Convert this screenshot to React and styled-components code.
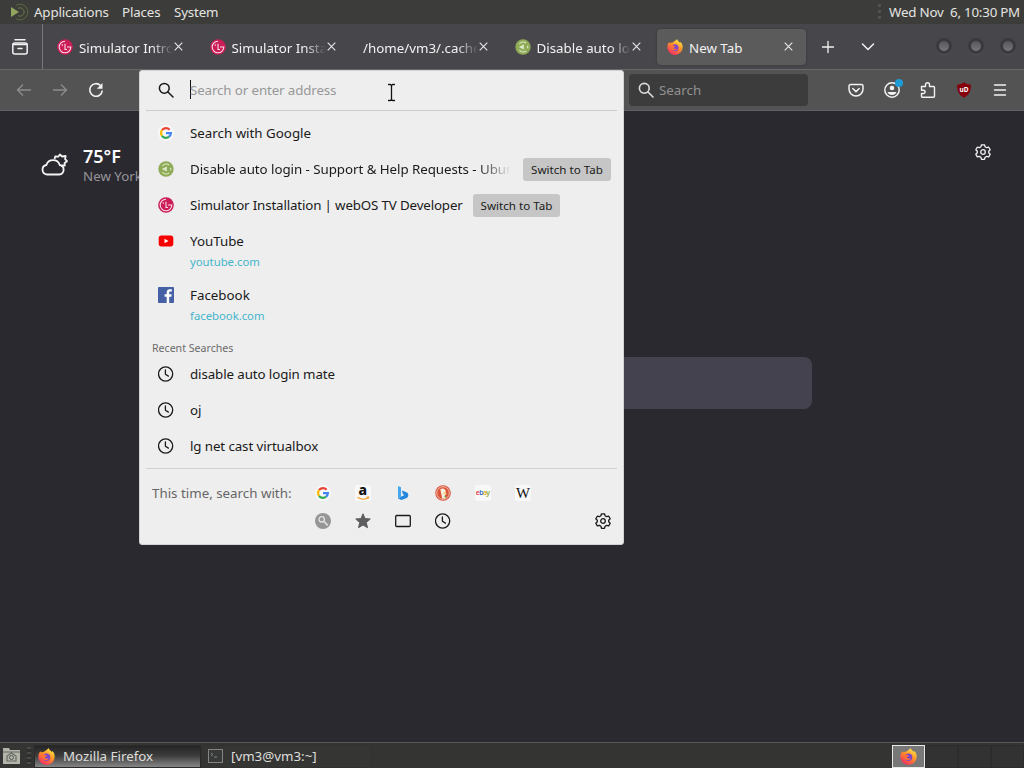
import React from 'react';
import styled, { createGlobalStyle } from 'styled-components';

const GlobalStyle = createGlobalStyle`
  * {
    box-sizing: border-box;
  }

  body {
    margin: 0;
    overflow: hidden;
    font-family: 'Noto Sans', 'Open Sans', sans-serif;
    font-size: 13.33px;
  }

  svg {
    display: block;
    flex-shrink: 0;
  }
`;

const Desktop = styled.div`
  position: relative;
  display: flex;
  flex-direction: column;
  width: 1024px;
  height: 768px;
  background: #2a2930;
  color: #f2f2f2;
`;

const TopPanel = styled.div`
  display: flex;
  align-items: center;
  height: 24px;
  padding: 0 4px 0 9px;
  background: #3c3c3a;
  color: #e4e4e0;
`;

const PanelMenu = styled.span`
  margin-left: ${props => props.$gap}px;
  width: ${props => props.$width}px;
  line-height: 24px;
  letter-spacing: -0.15px;
  white-space: nowrap;
`;

const PanelGrip = styled.span`
  width: 3px;
  height: 17px;
  margin-left: auto;
  background: repeating-linear-gradient(#525250 0 3px, #3c3c3a 3px 6px);
`;

const Clock = styled.span`
  margin-left: 8px;
  letter-spacing: -0.22px;
  white-space: pre;
`;

const TabBar = styled.div`
  display: flex;
  align-items: center;
  height: 45px;
  background: #47464b;
`;

const FirefoxView = styled.div`
  display: flex;
  align-items: center;
  justify-content: center;
  width: 43px;
  height: 45px;
  padding-right: 3px;
  border-right: 1px solid #78787b;
`;

const Tabs = styled.div`
  display: flex;
  gap: 3.5px;
  padding-left: 4px;
`;

const Tab = styled.div`
  display: flex;
  align-items: center;
  width: 149px;
  height: 36px;
  padding: 0 13px 0 10px;
  border-radius: 4px;
  background: ${props => (props.$selected ? '#5b5b5c' : 'transparent')};
  box-shadow: ${props => (props.$selected ? '0 0 2px #303033' : 'none')};
`;

const TabTitle = styled.span`
  flex: 1;
  min-width: 0;
  margin-left: ${props => (props.$noIcon ? 1 : 6)}px;
  padding-top: 2px;
  overflow: hidden;
  line-height: 24px;
  white-space: nowrap;
  mask-image: ${props => (props.$fade ? 'linear-gradient(to left, transparent 1px, black 22px)' : 'none')};
`;

const TabClose = styled.span`
  display: flex;
`;

const TabActions = styled.div`
  display: flex;
  gap: 24px;
  margin-left: 14px;
`;

const WindowButtons = styled.div`
  display: flex;
  gap: 16px;
  margin-left: auto;
  padding: 0 8px 2px 0;
`;

const WindowButton = styled.span`
  width: 16px;
  height: 16px;
  border: 3px solid #3a3a3e;
  border-radius: 50%;
  background: linear-gradient(#55555c, #77777c);
  box-shadow: 0 1px 0 #55555a;
`;

const NavBar = styled.div`
  display: flex;
  align-items: center;
  height: 42px;
  padding: 0 16px;
  border-top: 1px solid #68686a;
  border-bottom: 1px solid #616163;
  background: #535353;
`;

const NavButtons = styled.div`
  display: flex;
  gap: 20px;
  width: 613px;
`;

const SearchBox = styled.div`
  display: flex;
  align-items: center;
  width: 179px;
  height: 32px;
  padding-left: 9px;
  gap: 5px;
  border-radius: 4px;
  background: #3c3c3c;
  color: #929292;
  line-height: 18px;
`;

const ToolbarIcons = styled.div`
  display: flex;
  gap: 20px;
  margin-left: auto;
`;

const Account = styled.div`
  position: relative;
`;

const Badge = styled.span`
  position: absolute;
  top: -3px;
  right: -3px;
  width: 8px;
  height: 8px;
  border-radius: 50%;
  background: #1c9bd6;
`;

const Page = styled.main`
  flex: 1;
  display: flex;
  flex-direction: column;
  background: #2a2930;
`;

const PageHeader = styled.div`
  display: flex;
  justify-content: space-between;
  height: 246px;
  padding: 33px 33px 0 40px;
`;

const Weather = styled.div`
  display: flex;
  gap: 14px;
  height: 42px;
  align-items: center;
`;

const Temperature = styled.div`
  color: #fbfbfe;
  font-size: 18px;
  font-weight: 600;
  line-height: 21px;
`;

const City = styled.div`
  color: #96959a;
  line-height: 18px;
  white-space: nowrap;
`;

const PageSearch = styled.div`
  width: 600px;
  height: 52px;
  margin-left: 212px;
  border-radius: 8px;
  background: #44424e;
`;

const UrlPopup = styled.section`
  position: absolute;
  top: 70px;
  left: 139px;
  width: 485px;
  height: 475px;
  padding: 0 6px;
  border: 1px solid #d2d2d5;
  border-radius: 3px;
  background: #eeeeee;
  color: #1a1a1a;
`;

const UrlInput = styled.div`
  display: flex;
  align-items: center;
  height: 40px;
  padding: 0 0 2px 12px;
  border-bottom: 1px solid #cbcbcb;
`;

const Caret = styled.span`
  width: 1px;
  height: 19px;
  margin-left: 16px;
  background: #111111;
`;

const Placeholder = styled.span`
  margin-left: -1px;
  color: #989898;
  letter-spacing: -0.12px;
`;

const MousePointer = styled.div`
  position: absolute;
  top: 12px;
  left: 247px;
`;

const Results = styled.div`
  padding-top: 4px;
`;

const Result = styled.div`
  display: flex;
  align-items: center;
  height: 36px;
  padding: 0 6px 0 12px;
`;

const ResultTitle = styled.span`
  width: ${props => (props.$width ? props.$width + 'px' : 'auto')};
  margin-left: 16px;
  overflow: ${props => (props.$fade ? 'hidden' : 'visible')};
  line-height: 22px;
  letter-spacing: ${props => props.$spacing || 0}px;
  white-space: nowrap;
  mask-image: ${props => (props.$fade ? 'linear-gradient(to left, transparent, black 32px)' : 'none')};
`;

const SwitchButton = styled.span`
  width: ${props => props.$width}px;
  height: 23px;
  margin-left: ${props => props.$gap}px;
  border-radius: 3px;
  background: #c6c6c6;
  font-size: 11.6px;
  line-height: 23px;
  text-align: center;
  white-space: nowrap;
`;

const TopSite = styled.div`
  display: flex;
  height: 54px;
  padding: 10px 0 0 12px;
`;

const SiteText = styled.div`
  margin: -2px 0 0 16px;
  line-height: 20px;
`;

const SiteUrl = styled.div`
  color: #45b5cb;
  font-size: 11.3px;
  line-height: 21px;
`;

const SectionLabel = styled.div`
  height: 16px;
  margin: 9px 0 0 6px;
  color: #6b6b6b;
  font-size: 10.6px;
  line-height: 17px;
`;

const OneOffs = styled.div`
  display: flex;
  height: 75px;
  margin-top: 4px;
  padding: 16px 6px 0;
  border-top: 1px solid #d1d1d1;
`;

const OneOffLabel = styled.span`
  width: 163px;
  color: #666666;
  line-height: 16px;
  white-space: nowrap;
`;

const EngineGrid = styled.div`
  display: grid;
  grid-template-columns: repeat(6, 16px);
  grid-auto-rows: 16px;
  gap: 12px 24px;
`;

const SettingsButton = styled.span`
  margin: 28px 0 0 auto;
`;

const BottomPanel = styled.div`
  display: flex;
  align-items: center;
  height: 26px;
  padding: 1px 0 0 2px;
  border-top: 1px solid #58585b;
  background: #343433;
`;

const TaskGrip = styled.span`
  width: 4px;
  height: 18px;
  margin: 0 3px 0 6px;
  background: repeating-linear-gradient(#4a4a4a 0 2px, #2e2e2e 2px 5px);
`;

const Task = styled.div`
  display: flex;
  align-items: center;
  gap: 8px;
  width: ${props => (props.$active ? 167 : 171)}px;
  height: 23px;
  padding-left: ${props => (props.$active ? 3 : 6)}px;
  border: 1px solid ${props => (props.$active ? '#2a2a2a' : '#313130')};
  background: ${props => (props.$active ? 'linear-gradient(#252525, #3c3c3c 45%, #858585)' : '#353534')};
  color: #dededb;
  line-height: 20px;
  white-space: nowrap;
`;

const Workspaces = styled.div`
  display: flex;
  margin-left: auto;
`;

const Workspace = styled.span`
  display: flex;
  align-items: center;
  justify-content: center;
  width: 33px;
  height: 23px;
  border: 1px solid ${props => (props.$active ? '#e8e8e8' : '#2c2c2c')};
  background: ${props => (props.$active ? '#787878' : '#323232')};
`;

const Line = ({ size = 16, width = 1.3, children }) => (
  <svg
    width={size}
    height={size}
    viewBox="0 0 16 16"
    fill="none"
    stroke="currentColor"
    strokeWidth={width}
    strokeLinecap="round"
    strokeLinejoin="round"
  >
    {children}
  </svg>
);

const SearchIcon = () => (
  <Line width={1.5}>
    <circle cx="6.3" cy="6.3" r="4.9" />
    <path d="M10 10l5 5" />
  </Line>
);

const ClockIcon = () => (
  <Line width={1.3}>
    <circle cx="7.6" cy="8" r="7.1" />
    <path d="M7.4 4v4.3l3 1.8" />
  </Line>
);

const GearIcon = () => (
  <Line width={1.3}>
    <path d="M6.5.8h3l.6 2 1.5.9 2.1-.5 1.5 2.6-1.5 1.5v1.5l1.5 1.5-1.5 2.6-2.1-.5-1.5.9-.6 2h-3l-.6-2-1.5-.9-2.1.5-1.5-2.6 1.5-1.5V7.3L.8 5.8l1.5-2.6 2.1.5 1.5-.9z" />
    <circle cx="8" cy="8" r="2.3" />
  </Line>
);

const CloseIcon = () => (
  <svg width="9" height="9" viewBox="0 0 9 9" stroke="#e8e8e8" strokeWidth="1.1">
    <path d="M.7.7l7.6 7.6M8.3.7L.7 8.3" />
  </svg>
);

const LgIcon = () => (
  <svg width="16" height="16" viewBox="0 0 16 16" fill="none">
    <circle cx="8" cy="8" r="7.8" fill="#cb1d57" />
    <path d="M8 2.2a5.8 5.8 0 1 0 5.8 5.8H10M8 4.8v5.7h2" stroke="#fbdce6" strokeWidth="1.1" />
    <circle cx="5.3" cy="6" r=".8" fill="#fbdce6" />
  </svg>
);

const MateIcon = () => (
  <svg width="16" height="16" viewBox="0 0 16 16" fill="none">
    <circle cx="8" cy="8" r="7.7" fill="#8fab58" />
    <path d="M4.4 5a4.7 4.7 0 0 1 6.8-.9M4.4 11a4.7 4.7 0 0 0 6.8.9M12.7 6.8v2.4" stroke="#dfe9c8" strokeWidth="1.1" />
    <path d="M3.8 8l5-2.6v5.2z" fill="#dfe9c8" />
  </svg>
);

const MenuLogo = () => (
  <svg width="20" height="18" viewBox="0 0 20 18" fill="none">
    <path d="M2 4l8 5-8 5z" fill="#91a65c" />
    <path d="M7 2.3a7.8 7.8 0 1 1 0 13.4" stroke="#5b6c3c" strokeWidth="1" />
    <path d="M9 5.3a4.2 4.2 0 1 1 0 7.4" stroke="#687949" strokeWidth="1" />
  </svg>
);

const FirefoxIcon = ({ size = 16 }) => (
  <svg width={size} height={size} viewBox="0 0 16 16">
    <defs>
      <linearGradient id="flame" x1=".8" y1="0" x2=".2" y2="1">
        <stop offset="0" stopColor="#fff04a" />
        <stop offset=".45" stopColor="#ff9226" />
        <stop offset="1" stopColor="#f3216b" />
      </linearGradient>
    </defs>
    <path d="M10 0c.3 1.5 1.7 2.3 2.8 3.5.5.2.8-.2.9-.6 1.3 1.5 2 3.3 2 5.2A7.7 7.7 0 0 1 .3 8.3C.3 6.2 1 4.3 2.4 2.8c0 .8.2 1.2.5 1.5.8-.7 1.7-.8 2.7-.6C6.3 2.4 8.8 2 10 0z" fill="url(#flame)" />
    <circle cx="8" cy="8.7" r="3.5" fill="#7b45cc" />
    <path d="M2.8 6.2c1.5-.7 3-.4 4 .5 1 .1 1.7.3 1.6.7-.3.8-1.6.5-1.9 1.5.6 1.3 2.4 1.3 3.8.4-.7 2.5-4.7 3.1-6.2.4z" fill="#ff7139" />
  </svg>
);

const GoogleIcon = () => (
  <svg width="16" height="16" viewBox="0 0 16 16">
    <circle cx="8" cy="8" r="8" fill="#f8f8f8" />
    <g fill="none" strokeWidth="2.2">
      <path d="M4 5.2A4.9 4.9 0 0 1 11.6 4.7" stroke="#e94335" />
      <path d="M4 5.2a4.9 4.9 0 0 0 0 5.6" stroke="#fbbc05" />
      <path d="M4 10.8a4.9 4.9 0 0 0 7.1.9" stroke="#34a853" />
      <path d="M11.1 11.7A4.9 4.9 0 0 0 12.9 8.2H8" stroke="#4285f4" />
    </g>
  </svg>
);

const YouTubeIcon = () => (
  <svg width="16" height="16" viewBox="0 0 16 16">
    <rect x=".7" y="2.6" width="14.6" height="10.8" rx="2.6" fill="#f70000" />
    <path d="M6.5 5.7v4.6l4-2.3z" fill="#fff" />
  </svg>
);

const FacebookIcon = () => (
  <svg width="16" height="16" viewBox="0 0 16 16">
    <rect width="16" height="16" rx=".8" fill="#4560a5" />
    <path d="M8.7 16V9.7H6.6V7.3h2.1V5.5c0-2.2 1.3-3.3 3.2-3.3.9 0 1.7.1 1.9.1v2.2h-1.3c-1 0-1.3.5-1.3 1.2v1.6h2.5l-.3 2.4h-2.2V16z" fill="#fff" />
  </svg>
);

const AmazonIcon = () => (
  <svg width="16" height="16" viewBox="0 0 16 16" overflow="visible">
    <rect width="16" height="16" rx="2" fill="#f8f8f8" />
    <text x="7.7" y="10.3" fontSize="14" fontWeight="800" textAnchor="middle" fill="#111">a</text>
    <path d="M2.5 12.3c3.3 2.3 7.5 2.3 10.6.4M11.6 12.2l2-.1-.6 1.8" fill="none" stroke="#f5a12b" strokeWidth="1.2" />
  </svg>
);

const BingIcon = () => (
  <svg width="16" height="16" viewBox="0 0 16 16">
    <path d="M3 1l3 1.2v9.2L3 13.5z" fill="#43a7ee" />
    <path d="M6.8 5.5l4.7 1.8c2.5 1.2 2.3 4.5.2 5.7L6.5 15 3 13.5l3-1.8 3.5-1.7-1.6-.8z" fill="#2286dd" />
  </svg>
);

const DuckIcon = () => (
  <svg width="16" height="16" viewBox="0 0 16 16">
    <circle cx="8" cy="8" r="7.8" fill="#d95438" />
    <circle cx="8" cy="8" r="6.3" fill="none" stroke="#f8ddd3" strokeWidth=".8" />
    <path d="M5.3 4.3c2.5-2 5.5-.5 5.5 2.7v1l1 1-2 1 1 3.4H7.2z" fill="#f6f0dc" />
    <path d="M8.5 7.5h3l-2.6 1.8z" fill="#e5b629" />
    <path d="M8.8 11.5l2.4-.7v2z" fill="#67aa47" />
  </svg>
);

const EbayIcon = () => (
  <svg width="16" height="16" viewBox="0 0 16 16">
    <rect width="16" height="16" rx="2" fill="#f8f8f8" />
    <text x=".7" y="10" fontSize="7" fontWeight="600" textLength="14.5">
      <tspan fill="#df4248">e</tspan>
      <tspan fill="#3970c8">b</tspan>
      <tspan fill="#e3b028">a</tspan>
      <tspan fill="#88aa31">y</tspan>
    </text>
  </svg>
);

const WikipediaIcon = () => (
  <svg width="16" height="16" viewBox="0 0 16 16">
    <rect width="16" height="16" rx="2" fill="#f8f8f8" />
    <text x="8" y="12.8" fontSize="14" fontFamily="Liberation Serif, serif" textLength="14" lengthAdjust="spacingAndGlyphs" textAnchor="middle" fill="#111">W</text>
  </svg>
);

const tabs = [
  { title: 'Simulator Intro', icon: <LgIcon /> },
  { title: 'Simulator Insta', icon: <LgIcon /> },
  { title: '/home/vm3/.cache' },
  { title: 'Disable auto lo', icon: <MateIcon /> },
  { title: 'New Tab', icon: <FirefoxIcon />, selected: true },
];

const recentSearches = ['disable auto login mate', 'oj', 'lg net cast virtualbox'];

const Popup = () => (
  <UrlPopup>
    <UrlInput>
      <SearchIcon />
      <Caret />
      <Placeholder>Search or enter address</Placeholder>
    </UrlInput>
    <MousePointer>
      <svg width="9" height="19" viewBox="0 0 9 19" fill="none">
        <path d="M1 1.5h2.5l1 1 1-1H8M4.5 2.5v14M1 17.5h2.5l1-1 1 1H8" stroke="#fff" strokeWidth="3" />
        <path d="M1 1.5h2.5l1 1 1-1H8M4.5 2.5v14M1 17.5h2.5l1-1 1 1H8" stroke="#111" strokeWidth="1.4" />
      </svg>
    </MousePointer>
    <Results>
      <Result>
        <GoogleIcon />
        <ResultTitle>Search with Google</ResultTitle>
      </Result>
      <Result>
        <MateIcon />
        <ResultTitle $width={321} $fade $spacing={-0.05}>
          Disable auto login - Support &amp; Help Requests - Ubun
        </ResultTitle>
        <SwitchButton $gap={12} $width={88}>Switch to Tab</SwitchButton>
      </Result>
      <Result>
        <LgIcon />
        <ResultTitle $width={275} $spacing={-0.15}>Simulator Installation | webOS TV Developer</ResultTitle>
        <SwitchButton $gap={8} $width={87}>Switch to Tab</SwitchButton>
      </Result>
      <TopSite>
        <YouTubeIcon />
        <SiteText>
          YouTube
          <SiteUrl>youtube.com</SiteUrl>
        </SiteText>
      </TopSite>
      <TopSite>
        <FacebookIcon />
        <SiteText>
          Facebook
          <SiteUrl>facebook.com</SiteUrl>
        </SiteText>
      </TopSite>
      <SectionLabel>Recent Searches</SectionLabel>
      {recentSearches.map(search => (
        <Result key={search}>
          <ClockIcon />
          <ResultTitle $spacing={-0.1}>{search}</ResultTitle>
        </Result>
      ))}
    </Results>
    <OneOffs>
      <OneOffLabel>This time, search with:</OneOffLabel>
      <EngineGrid>
        <GoogleIcon />
        <AmazonIcon />
        <BingIcon />
        <DuckIcon />
        <EbayIcon />
        <WikipediaIcon />
        <svg width="16" height="16" viewBox="0 0 16 16" fill="none">
          <circle cx="8" cy="8" r="8" fill="#969696" />
          <circle cx="6.7" cy="6.3" r="2.7" stroke="#e1e1e1" strokeWidth="1.3" />
          <path d="M8.8 8.4l4 4" stroke="#e1e1e1" strokeWidth="1.5" />
        </svg>
        <svg width="16" height="16" viewBox="0 0 16 16" fill="#5e5e60" stroke="#5e5e60" strokeLinejoin="round">
          <path d="M8 .8l2 4.8 5.3.4-4 3.5 1.2 5.2L8 12l-4.5 2.7 1.2-5.2L.7 6 6 5.6z" />
        </svg>
        <Line>
          <rect x=".7" y="2.5" width="14.6" height="11" rx="1" />
        </Line>
        <ClockIcon />
      </EngineGrid>
      <SettingsButton>
        <GearIcon />
      </SettingsButton>
    </OneOffs>
  </UrlPopup>
);

const App = () => (
  <>
    <GlobalStyle />
    <Desktop>
      <TopPanel>
        <MenuLogo />
        <PanelMenu $gap={5} $width={74}>Applications</PanelMenu>
        <PanelMenu $gap={14} $width={38}>Places</PanelMenu>
        <PanelMenu $gap={14} $width={44}>System</PanelMenu>
        <PanelGrip />
        <Clock>Wed Nov  6, 10:30 PM</Clock>
      </TopPanel>

      <TabBar>
        <FirefoxView>
          <Line width={1.5}>
            <path d="M3 .8h10" />
            <rect x=".8" y="4" width="14.4" height="11" rx="2" />
            <path d="M1 5.5h14M6 9.5h4" />
          </Line>
        </FirefoxView>
        <Tabs>
          {tabs.map(tab => (
            <Tab key={tab.title} $selected={tab.selected}>
              {tab.icon}
              <TabTitle $fade={!tab.selected} $noIcon={!tab.icon}>{tab.title}</TabTitle>
              <TabClose>
                <CloseIcon />
              </TabClose>
            </Tab>
          ))}
        </Tabs>
        <TabActions>
          <Line>
            <path d="M8 2.5v11M2.5 8h11" />
          </Line>
          <Line width={1.5}>
            <path d="M2.5 5l5.5 5.5L13.5 5" />
          </Line>
        </TabActions>
        <WindowButtons>
          <WindowButton />
          <WindowButton />
          <WindowButton />
        </WindowButtons>
      </TabBar>

      <NavBar>
        <NavButtons>
          <svg width="16" height="16" viewBox="0 0 16 16" fill="none" stroke="#8d8d8d" strokeWidth="1.3">
            <path d="M15 8H1.500M7 2.500L1.500 8 7 13.500" />
          </svg>
          <svg width="16" height="16" viewBox="0 0 16 16" fill="none" stroke="#8d8d8d" strokeWidth="1.3">
            <path d="M1 8h13.500M9 2.500L14.500 8 9 13.500" />
          </svg>
          <svg width="16" height="16" viewBox="0 0 16 16" fill="none" stroke="#f2f2f2" strokeWidth="1.6">
            <path d="M12.5 3.5A6.3 6.3 0 1 0 14.3 8.5" />
            <path d="M14.5 1v5.700H8.800z" fill="#f2f2f2" stroke="none" />
          </svg>
        </NavButtons>
        <SearchBox>
          <Line width={1.6}>
            <g stroke="#dedede">
              <circle cx="6.3" cy="6.3" r="4.9" />
              <path d="M10 10l5 5" />
            </g>
          </Line>
          Search
        </SearchBox>
        <ToolbarIcons>
          <Line width={1.5}>
            <path d="M2.5 2.500h11a1.500 1.500 0 0 1 1.500 1.500v3a7 7 0 0 1-14 0V4a1.500 1.500 0 0 1 1.500-1.500z" />
            <path d="M4.8 6.500L8 9.600l3.200-3.100" />
          </Line>
          <Account>
            <Line width={1.5}>
              <circle cx="8" cy="8" r="7.2" />
              <circle cx="8" cy="6" r="2.3" fill="currentColor" stroke="none" />
              <path d="M3.5 10h9c-.5 2-2.300 3-4.500 3s-4-1-4.500-3z" fill="currentColor" stroke="none" />
            </Line>
            <Badge />
          </Account>
          <Line width={1.4}>
            <path d="M5.5 4.500V2.700a2 2 0 0 1 4 0v1.800h4a1 1 0 0 1 1 1v8.700a1 1 0 0 1-1 1H2.500a1 1 0 0 1-1-1V11.500h2a1.500 1.500 0 0 0 0-3.300h-2V4.500z" />
          </Line>
          <svg width="16" height="16" viewBox="0 0 16 16">
            <path d="M8 .3c2 1.400 4.300 2.200 6.900 2.500.1 6.300-1.800 10.300-6.900 12.900C2.900 13.100 1 9.100 1.100 2.800 3.700 2.500 6 1.700 8 .3z" fill="#86000b" />
            <text x="8" y="9.8" fill="#fff" fontSize="6.5" fontWeight="700" textAnchor="middle">uD</text>
          </svg>
          <Line width={1.4}>
            <path d="M2.5 3h11M2.500 8h11M2.500 13h11" />
          </Line>
        </ToolbarIcons>
      </NavBar>

      <Page>
        <PageHeader>
          <Weather>
            <svg width="29" height="26" viewBox="0 0 29 26" fill="none" stroke="#f4f4f4" strokeWidth="1.8" strokeLinejoin="round">
              <path d="M7 22.500a4.800 4.800 0 0 1-.6-9.500 7 7 0 0 1 13.300 0 4.800 4.800 0 0 1-.5 9.500z" />
              <path d="M14.500 7l.7-2.500 3 .2 1.700-2.200 2.200 2 3.500-.5-.5 3.200 1.900 2-2.400 1.700.2 2.600-3.300-.2" />
            </svg>
            <div>
              <Temperature>75°F</Temperature>
              <City>New York</City>
            </div>
          </Weather>
          <GearIcon />
        </PageHeader>
        <PageSearch />
      </Page>

      <BottomPanel>
        <svg width="19" height="18" viewBox="0 0 19 18" fill="none">
          <path d="M1 3V1h6l1 2h10v14H1z" fill="#b4b5aa" />
          <path d="M1 5h17M5 14V9l4.500-3L14 9v5z" stroke="#656a61" strokeWidth="1.2" />
          <circle cx="9.5" cy="10.5" r="2" stroke="#555950" />
        </svg>
        <TaskGrip />
        <Task $active>
          <FirefoxIcon size={17} />
          Mozilla Firefox
        </Task>
        <Task>
          <svg width="15" height="14" viewBox="0 0 15 14" fill="none">
            <rect x=".5" y=".5" width="14" height="13" stroke="#858585" fill="#373a38" />
            <path d="M3 4l2 1.500L3 7M6 8h3" stroke="#929292" strokeWidth=".8" />
          </svg>
          [vm3@vm3:~]
        </Task>
        <Workspaces>
          <Workspace $active>
            <FirefoxIcon size={17} />
          </Workspace>
          <Workspace />
          <Workspace />
          <Workspace />
        </Workspaces>
      </BottomPanel>

      <Popup />
    </Desktop>
  </>
);

export default App;
